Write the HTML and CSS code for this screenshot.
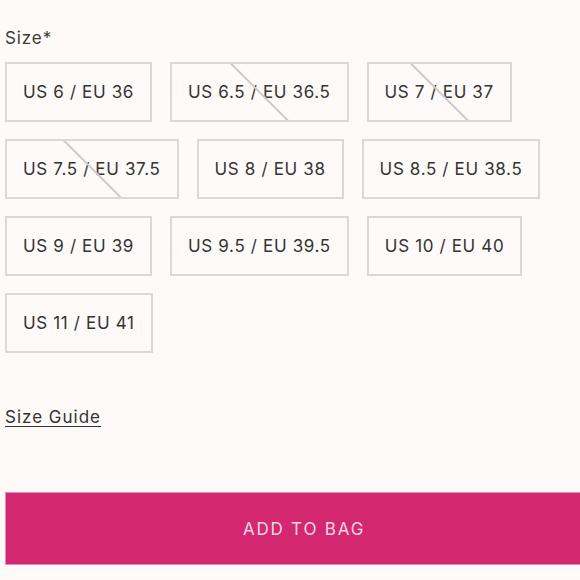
FILE: index.html
```html
<!DOCTYPE html>
<html>
<head>
<meta charset="utf-8">
<link rel="stylesheet" href="styles.css">
</head>
<body>
<div class="page">
  <div class="label">Size*</div>
  <div class="sizes">
    <button class="size">US 6 / EU 36</button>
    <button class="size na">US 6.5 / EU 36.5</button>
    <button class="size na">US 7 / EU 37</button>
    <button class="size na">US 7.5 / EU 37.5</button>
    <button class="size">US 8 / EU 38</button>
    <button class="size">US 8.5 / EU 38.5</button>
    <button class="size">US 9 / EU 39</button>
    <button class="size">US 9.5 / EU 39.5</button>
    <button class="size">US 10 / EU 40</button>
    <button class="size">US 11 / EU 41</button>
  </div>
  <a class="guide" href="#">Size Guide</a>
  <button class="add">ADD TO BAG</button>
</div>
</body>
</html>
```
FILE: styles.css
```css
html, body {
  margin: 0;
  padding: 0;
  background: #fdfaf9;
  overflow: hidden;
}
.page {
  width: 598px;
  padding: 0 0 0 5px;
  font-family: Inter, "Noto Sans", sans-serif;
  color: #333333;
}
.label {
  font-size: 17px;
  line-height: 24px;
  padding-top: 26px;
  letter-spacing: 0.9px;
  color: #3a3a3a;
}
.sizes {
  display: flex;
  flex-wrap: wrap;
  gap: 17px 18px;
  margin-top: 12px;
  width: 560px;
}
.size {
  position: relative;
  overflow: hidden;
  height: 60px;
  padding: 0 16px;
  border: 2px solid #dcd8d6;
  background: transparent;
  font-family: inherit;
  font-size: 17px;
  letter-spacing: 0.65px;
  color: #333333;
}
.size.na::after {
  content: "";
  position: absolute;
  left: 50%;
  top: 50%;
  width: 1.5px;
  height: 84px;
  background: #cfcac8;
  transform: translate(-50%, -50%) rotate(-45deg);
}
.guide {
  display: inline-block;
  margin-top: 52px;
  font-size: 17px;
  line-height: 24px;
  letter-spacing: 1px;
  color: #333333;
  text-decoration: underline;
  text-underline-offset: 3px;
}
.add {
  display: block;
  margin-top: 63px;
  width: 598px;
  height: 73px;
  border: 1px solid #e58fb8;
  background: #d3286f;
  color: #f7d6e5;
  font-family: inherit;
  font-size: 17px;
  letter-spacing: 1.8px;
}
```
